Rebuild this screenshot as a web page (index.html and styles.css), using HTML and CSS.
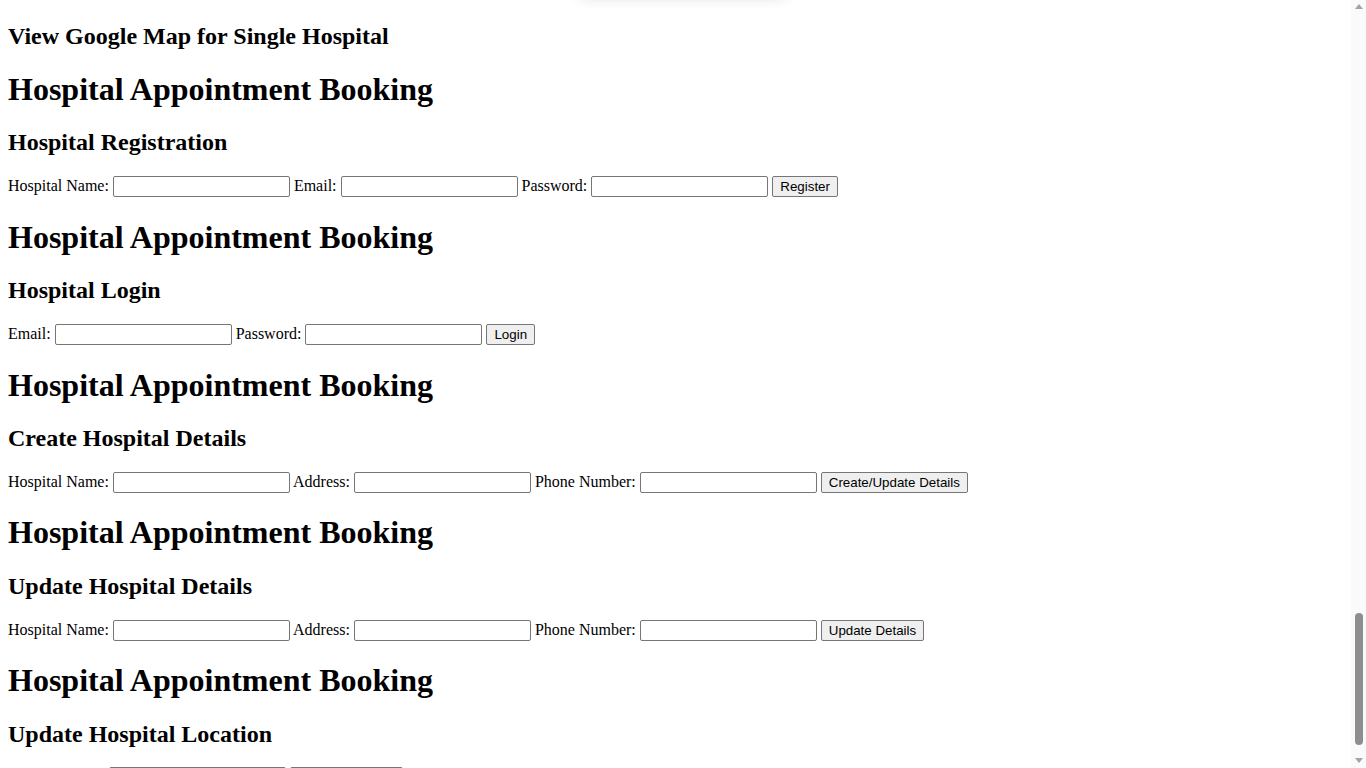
FILE: index.html
```html
<!DOCTYPE html>
<html lang="en">
<head>
<meta charset="utf-8">
<title>Hospital Appointment Booking</title>
<link rel="stylesheet" href="styles.css">
</head>
<body>
<div class="toast"></div>

<section class="block"><h1>Hospital Appointment Booking</h1><h2>Patient Registration</h2>
<form>Name: <input type="text"> Email: <input type="text"> Password: <input type="password"> <button type="button">Register</button></form></section>
<section class="block"><h1>Hospital Appointment Booking</h1><h2>Patient Login</h2>
<form>Email: <input type="text"> Password: <input type="password"> <button type="button">Login</button></form></section>
<section class="block"><h1>Hospital Appointment Booking</h1><h2>Create Patient Details</h2>
<form>Name: <input type="text"> Age: <input type="text"> Phone Number: <input type="text"> <button type="button">Create/Update Details</button></form></section>
<section class="block"><h1>Hospital Appointment Booking</h1><h2>Update Patient Details</h2>
<form>Name: <input type="text"> Age: <input type="text"> Phone Number: <input type="text"> <button type="button">Update Details</button></form></section>
<section class="block"><h1>Hospital Appointment Booking</h1><h2>Book Appointment</h2>
<form>Hospital: <input type="text"> Doctor: <input type="text"> Date: <input type="text"> <button type="button">Book Appointment</button></form></section>
<section class="block"><h1>Hospital Appointment Booking</h1><h2>View Appointments</h2>
<form>Patient Email: <input type="text"> <button type="button">View Appointments</button></form></section>
<section class="block"><h1>Hospital Appointment Booking</h1><h2>Cancel Appointment</h2>
<form>Appointment ID: <input type="text"> <button type="button">Cancel Appointment</button></form></section>
<section class="block"><h1>Hospital Appointment Booking</h1><h2>Doctor Registration</h2>
<form>Doctor Name: <input type="text"> Email: <input type="text"> Password: <input type="password"> <button type="button">Register</button></form></section>
<section class="block"><h1>Hospital Appointment Booking</h1><h2>Doctor Login</h2>
<form>Email: <input type="text"> Password: <input type="password"> <button type="button">Login</button></form></section>
<section class="block"><h1>Hospital Appointment Booking</h1><h2>Search Hospitals</h2>
<form>City: <input type="text"> <button type="button">Search</button></form></section>
<section class="block"><h1>Hospital Appointment Booking</h1><h2>View Google Map for All Hospitals</h2>
<form>City: <input type="text"> <button type="button">Show Map</button></form></section>
<div class="map-box"></div>

<h2 id="anchor">View Google Map for Single Hospital</h2>

<section class="block"><h1>Hospital Appointment Booking</h1><h2>Hospital Registration</h2>
<form>Hospital Name: <input type="text"> Email: <input type="text"> Password: <input type="password"> <button type="button">Register</button></form></section>

<section class="block"><h1>Hospital Appointment Booking</h1><h2>Hospital Login</h2>
<form>Email: <input type="text"> Password: <input type="password"> <button type="button">Login</button></form></section>

<section class="block"><h1>Hospital Appointment Booking</h1><h2>Create Hospital Details</h2>
<form>Hospital Name: <input type="text"> Address: <input type="text"> Phone Number: <input type="text"> <button type="button">Create/Update Details</button></form></section>

<section class="block"><h1>Hospital Appointment Booking</h1><h2>Update Hospital Details</h2>
<form>Hospital Name: <input type="text"> Address: <input type="text"> Phone Number: <input type="text"> <button type="button">Update Details</button></form></section>

<section class="block"><h1>Hospital Appointment Booking</h1><h2>Update Hospital Location</h2>
<form>Location URL: <input type="text"> <button type="button">Update Location</button></form></section>

<div class="scrollbar" aria-hidden="true">
  <div class="arrow-up"></div>
  <div class="thumb"></div>
  <div class="arrow-down"></div>
</div>

<script src="script.js"></script>
</body>
</html>
```

FILE: styles.css
```css
html {
  background: #ffffff;
}
body {
  margin: 8px;
  font-family: "Liberation Serif", "Times New Roman", serif;
  font-size: 16px;
  color: #000000;
}
h1 {
  font-size: 32px;
  margin: 21.44px 0;
}
h2 {
  font-size: 24px;
  margin: 19.92px 0;
}
form {
  margin: 0;
}
input {
  font: 13.333px "Liberation Sans", Arial, sans-serif;
  width: 177px;
  height: 21px;
  box-sizing: border-box;
  padding: 1px 2px;
  border: 1px solid #767676;
  border-radius: 2px;
  background: #ffffff;
}
button {
  font: 13.333px "Liberation Sans", Arial, sans-serif;
  color: #000000;
  height: 21px;
  padding: 1px 7px;
  border: 1px solid #767676;
  border-radius: 2px;
  background: #efefef;
}
.map-box {
  height: 300px;
}
.toast {
  position: fixed;
  top: -60px;
  left: 578px;
  width: 210px;
  height: 56px;
  background: #ffffff;
  border-radius: 6px;
  box-shadow: 0 2px 14px rgba(0, 0, 0, 0.12);
}
.scrollbar {
  position: fixed;
  top: 0;
  right: 0;
  width: 15px;
  height: 100vh;
  background: #fafafa;
}
.arrow-up {
  position: absolute;
  top: 4px;
  left: 4px;
  width: 0;
  height: 0;
  border-left: 4px solid transparent;
  border-right: 4px solid transparent;
  border-bottom: 5px solid #a3a3a3;
}
.arrow-down {
  position: absolute;
  bottom: 5px;
  left: 4px;
  width: 0;
  height: 0;
  border-left: 4px solid transparent;
  border-right: 4px solid transparent;
  border-top: 5px solid #a3a3a3;
}
.thumb {
  position: absolute;
  top: 613px;
  left: 4px;
  width: 8px;
  height: 132px;
  border-radius: 4px;
  background: #8e8e8e;
}
```

FILE: script.js
```js
(function () {
  var anchor = document.getElementById('anchor');
  var top = anchor.getBoundingClientRect().top + window.scrollY;
  window.scrollTo(0, top - 23);
})();
```
